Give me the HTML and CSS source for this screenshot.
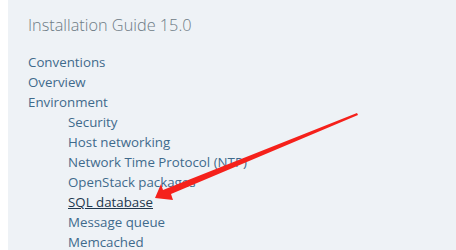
FILE: index.html
```html
<!DOCTYPE html>
<html>
<head>
    <title>Installation Guide</title>
    <link rel="stylesheet" href="styles.css">
</head>
<body>
    <div class="sidebar">
        <h2 class="title">Installation Guide 15.0</h2>
        <ul class="toc">
            <li><a href="#">Conventions</a></li>
            <li><a href="#">Overview</a></li>
            <li><a href="#">Environment</a>
                <ul class="sub">
                    <li><a href="#">Security</a></li>
                    <li><a href="#">Host networking</a></li>
                    <li><a href="#">Network Time Protocol (NTP)</a></li>
                    <li><a href="#">OpenStack packages</a></li>
                    <li><a href="#" class="current">SQL database</a></li>
                    <li><a href="#">Message queue</a></li>
                    <li><a href="#">Memcached</a></li>
                </ul>
            </li>
        </ul>
    </div>
    <svg class="arrow" width="456" height="250" viewBox="0 0 456 250">
        <polygon fill="#f5211b" points="357,113 358,115 171,194 173,200 155,198 161,184 163,190"/>
    </svg>
</body>
</html>
```

FILE: styles.css
```css
body {
    margin: 0;
    font-family: "Open Sans", sans-serif;
    background-color: #fff;
}

.sidebar {
    margin-left: 8px;
    height: 250px;
    background-color: #eef2f6;
    padding: 14px 0 0 20px;
    box-sizing: border-box;
}

.title {
    margin: 0 0 16px 0;
    font-size: 16.3px;
    font-weight: 300;
    color: #6d7b85;
}

.toc, .sub {
    list-style: none;
    margin: 0;
    padding: 0;
}

.sub {
    padding-left: 40px;
}

.toc li {
    line-height: 20px;
    font-size: 13.3px;
}

.toc a {
    color: #3f6a8c;
    text-decoration: none;
}

.toc a.current {
    color: #21384e;
    text-decoration: underline;
}

.arrow {
    position: absolute;
    left: 0;
    top: 0;
}
```
